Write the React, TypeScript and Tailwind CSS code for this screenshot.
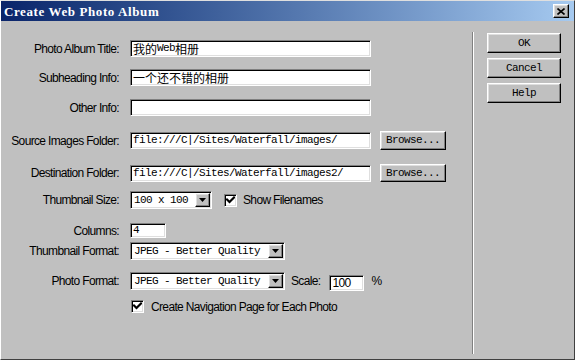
import React from 'react';

const sans = "font-['Liberation_Sans',Arial,sans-serif] text-[12px] tracking-[-0.65px] text-black";
const mono = "font-['Liberation_Mono',monospace] text-[11px] tracking-[-0.6px] text-black";
const cjk = "font-['Noto_Sans_CJK_SC',sans-serif] text-[12px] tracking-normal text-black";

const sunken =
  'bg-white border border-t-[#808080] border-l-[#808080] border-b-white border-r-white shadow-[inset_1px_1px_0_#000,inset_-1px_-1px_0_#dfdfdf]';
const raised =
  'bg-[#c0c0c0] border border-t-white border-l-white border-b-black border-r-black shadow-[inset_-1px_-1px_0_#808080,inset_1px_1px_0_#dfdfdf]';

const Label: React.FC<{ text: string }> = ({ text }) => (
  <div className={`w-[118px] shrink-0 text-right leading-none ${sans}`}>{text}</div>
);

const Checkbox: React.FC = () => (
  <div className={`w-[13px] h-[13px] shrink-0 ${sunken} flex items-center justify-center`}>
    <svg width="9" height="9" viewBox="0 0 9 9">
      <path d="M1 3.5 L3.5 6 L8 1.5" stroke="#000" strokeWidth="2.2" fill="none" strokeLinecap="square" />
    </svg>
  </div>
);

const ArrowBtn: React.FC = () => (
  <div className={`w-[15px] h-full shrink-0 ${raised} flex items-center justify-center`}>
    <svg width="7" height="4" viewBox="0 0 7 4">
      <path d="M0 0 H7 L3.5 4 Z" fill="#000" />
    </svg>
  </div>
);

const Select: React.FC<{ value: string; width: string }> = ({ value, width }) => (
  <div className={`${width} h-[18px] ${sunken} flex items-stretch p-[1px]`}>
    <div className={`flex-1 flex items-center pl-[2px] leading-none ${mono}`}>{value}</div>
    <ArrowBtn />
  </div>
);

const Button: React.FC<{ text: string; className: string }> = ({ text, className }) => (
  <div className={`${className} ${raised} flex items-center justify-center leading-none ${mono}`}>{text}</div>
);

const Row: React.FC<{ className: string; children: React.ReactNode }> = ({ className, children }) => (
  <div className={`flex items-center ${className}`}>{children}</div>
);

export default function App() {
  return (
    <div className="w-[575px] h-[360px] bg-[#c0c0c0] flex flex-col border border-t-[#dfdfdf] border-l-white border-r-[#404040] border-b-[#404040] overflow-hidden">
      {/* title bar */}
      <div className="h-[20px] shrink-0 flex items-center justify-between bg-linear-to-r from-[#0a246a] to-[#a6caf0]">
        <span className="pl-[3px] text-white font-bold font-['Liberation_Serif',serif] text-[13px] tracking-[0.6px] leading-none">
          Create Web Photo Album
        </span>
        <div className={`mr-[5px] w-[16px] h-[14px] ${raised} flex items-center justify-center`}>
          <svg width="8" height="7" viewBox="0 0 8 7">
            <path d="M0.5 0.5 L7.5 6.5 M7.5 0.5 L0.5 6.5" stroke="#000" strokeWidth="1.6" />
          </svg>
        </div>
      </div>

      <div className="flex-1 flex">
        {/* form */}
        <div className="w-[471px] shrink-0 flex flex-col">
          <Row className="mt-[19px] h-[17px]">
            <Label text="Photo Album Title:" />
            <div className={`ml-[11px] w-[241px] h-[17px] ${sunken} flex items-center pl-[2px] leading-none`}>
              <span className={cjk}>我的</span>
              <span className={mono}>Web</span>
              <span className={cjk}>相册</span>
            </div>
          </Row>
          <Row className="mt-[12px] h-[17px]">
            <Label text="Subheading Info:" />
            <div className={`ml-[11px] w-[241px] h-[17px] ${sunken} flex items-center pl-[2px] leading-none`}>
              <span className={cjk}>一个还不错的相册</span>
            </div>
          </Row>
          <Row className="mt-[13px] h-[17px]">
            <Label text="Other Info:" />
            <div className={`ml-[11px] w-[241px] h-[17px] ${sunken}`} />
          </Row>
          <Row className="mt-[15px] h-[19px]">
            <Label text="Source Images Folder:" />
            <div className={`ml-[11px] w-[241px] h-[17px] ${sunken} flex items-center pl-[2px] leading-none ${mono}`}>
              file:///C|/Sites/Waterfall/images/
            </div>
            <Button text="Browse..." className="ml-[9px] w-[66px] h-[19px]" />
          </Row>
          <Row className="mt-[14px] h-[18px]">
            <Label text="Destination Folder:" />
            <div className={`ml-[11px] w-[241px] h-[17px] ${sunken} flex items-center pl-[2px] leading-none ${mono}`}>
              file:///C|/Sites/Waterfall/images2/
            </div>
            <Button text="Browse..." className="ml-[9px] w-[66px] h-[18px]" />
          </Row>
          <Row className="mt-[9px] h-[18px]">
            <Label text="Thumbnail Size:" />
            <div className="ml-[11px]">
              <Select value="100 x 100" width="w-[82px]" />
            </div>
            <div className="ml-[12px]">
              <Checkbox />
            </div>
            <span className={`ml-[6px] leading-none ${sans}`}>Show Filenames</span>
          </Row>
          <Row className="mt-[14px] h-[15px]">
            <Label text="Columns:" />
            <div className={`ml-[11px] w-[36px] h-[15px] ${sunken} flex items-center pl-[2px] leading-none ${mono}`}>4</div>
          </Row>
          <Row className="mt-[4px] h-[18px]">
            <Label text="Thumbnail Format:" />
            <div className="ml-[11px]">
              <Select value="JPEG - Better Quality" width="w-[155px]" />
            </div>
          </Row>
          <Row className="mt-[12px] h-[18px]">
            <Label text="Photo Format:" />
            <div className="ml-[11px]">
              <Select value="JPEG - Better Quality" width="w-[155px]" />
            </div>
            <span className={`ml-[6px] leading-none ${sans}`}>Scale:</span>
            <div className={`ml-[9px] mt-[3px] w-[35px] h-[16px] ${sunken} flex items-center pl-[2px] leading-none ${sans}`}>100</div>
            <span className={`ml-[7px] leading-none ${sans}`}>%</span>
          </Row>
          <Row className="mt-[10px] h-[13px] pl-[130px]">
            <Checkbox />
            <span className={`ml-[7px] leading-none ${sans}`}>Create Navigation Page for Each Photo</span>
          </Row>
        </div>

        {/* separator */}
        <div className="mt-[11px] mb-[5px] w-[2px] shrink-0 border-l border-l-[#808080] border-r border-r-white" />

        {/* buttons */}
        <div className="pl-[13px] pt-[12px] flex flex-col gap-[5px]">
          <Button text="OK" className="w-[74px] h-[20px]" />
          <Button text="Cancel" className="w-[74px] h-[20px]" />
          <Button text="Help" className="w-[74px] h-[20px]" />
        </div>
      </div>
    </div>
  );
}
